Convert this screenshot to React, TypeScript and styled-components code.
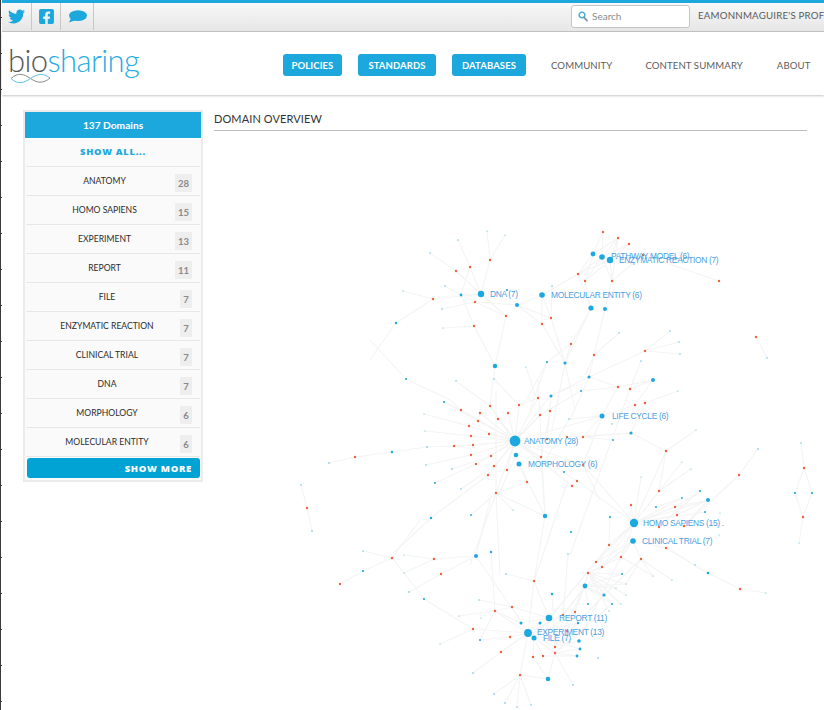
import React from "react";
import styled, { createGlobalStyle } from "styled-components";
import { FaTwitter, FaFacebookSquare } from "react-icons/fa";

const Global = createGlobalStyle`
  html, body { margin: 0; padding: 0; background: #fff; }
  body { font-family: Lato, "Liberation Sans", sans-serif; overflow: hidden; }
  * { box-sizing: border-box; }
`;

const Page = styled.div`
  width: 824px;
  height: 710px;
  overflow: hidden;
  padding-left: 2px;
  background:
    linear-gradient(#3a3a3a, #3a3a3a) 0 0 / 1px 100% no-repeat,
    repeating-linear-gradient(#fff 0, #fff 17px, #444 17px, #444 18px, #fff 18px, #fff 36px) 1px 0 / 1px 100% no-repeat,
    #fff;
  display: flex;
  flex-direction: column;
`;

const TopBar = styled.div`
  height: 32px;
  flex: none;
  border-top: 3px solid #1ca8dd;
  border-bottom: 1px solid #c4c4c4;
  background: linear-gradient(#f8f8f8, #e6e6e6);
  display: flex;
  align-items: stretch;
`;

const Social = styled.div`
  display: flex;
  height: 27px;
`;

const SocialCell = styled.a<{ $w: number }>`
  width: ${(p) => p.$w}px;
  border-right: 1px solid #c8c8c8;
  display: flex;
  align-items: center;
  justify-content: center;
  color: #1ca8dd;
`;

const SearchBox = styled.div`
  margin: 2px 0 0 477px;
  width: 119px;
  height: 23px;
  border: 1px solid #c6c6c6;
  border-radius: 3px;
  background: #fff;
  display: flex;
  align-items: center;
  padding: 0 0 1px 6px;
  gap: 4px;
  font-size: 10px;
  color: #8b8b8b;
  flex: none;
`;

const Profile = styled.div`
  margin-left: 8px;
  font-size: 9.7px;
  line-height: 23px;
  margin-top: 1px;
  color: #5b5b5b;
  white-space: nowrap;
  letter-spacing: 0.2px;
`;

const Header = styled.header`
  height: 63px;
  flex: none;
  background: #fff;
  box-shadow: 0 1px 2px rgba(0, 0, 0, 0.22);
  display: flex;
  align-items: flex-start;
  position: relative;
`;

const Logo = styled.div`
  width: 281px;
  padding: 10px 0 0 6px;
  flex: none;
`;

const LogoWord = styled.div`
  font-size: 31px;
  font-weight: 300;
  line-height: 36px;
  letter-spacing: -0.6px;
  color: #28ace2;
  height: 31px;
  white-space: nowrap;
`;

const LogoBio = styled.span`
  color: #555;
`;

const LogoWave = styled.svg`
  display: block;
  margin-left: 2px;
`;

const Nav = styled.nav`
  display: flex;
  align-items: center;
  height: 22px;
  margin-top: 22px;
`;

const NavButton = styled.a<{ $w: number; $gap: number }>`
  width: ${(p) => p.$w}px;
  margin-right: ${(p) => p.$gap}px;
  height: 22px;
  border-radius: 3px;
  background: #1ca8dd;
  color: #fff;
  font-size: 9.5px;
  font-weight: 700;
  display: flex;
  align-items: center;
  justify-content: center;
  white-space: nowrap;
  letter-spacing: 0.1px;
`;

const NavLink = styled.a<{ $gap: number }>`
  margin-left: ${(p) => p.$gap}px;
  color: #5d5d5d;
  font-size: 9.6px;
  white-space: nowrap;
  letter-spacing: 0.1px;
`;

const Body = styled.div`
  flex: 1;
  display: flex;
  align-items: flex-start;
  padding: 15px 0 0 21px;
  min-height: 0;
`;

const Sidebar = styled.aside`
  width: 180px;
  flex: none;
  background: #fafafa;
  border: 2px solid #ececec;
`;

const SideHead = styled.div`
  height: 27px;
  background: #1ca8dd;
  color: #fff;
  font-size: 10.2px;
  font-weight: 700;
  display: flex;
  align-items: center;
  justify-content: center;
  border-bottom: 1px solid #fff;
`;

const ShowAll = styled.div`
  height: 28px;
  margin: 0 1px;
  color: #1ca8dd;
  font-family: "Open Sans", sans-serif;
  font-weight: 800;
  font-size: 9.4px;
  letter-spacing: 0.7px;
  display: flex;
  align-items: center;
  justify-content: center;
  border-bottom: 1px solid #e8e8e8;
  padding-bottom: 2px;
`;

const Row = styled.div`
  height: 29px;
  margin: 0 1px;
  border-bottom: 1px solid #e8e8e8;
  display: flex;
  align-items: center;
  padding: 0 8px;
`;

const RowLabel = styled.div`
  flex: 1;
  text-align: center;
  font-size: 8.6px;
  color: #2c2c2c;
  white-space: nowrap;
`;

const Badge = styled.div<{ $wide: boolean }>`
  width: ${(p) => (p.$wide ? 17 : 12)}px;
  height: 18px;
  background: #eeeeee;
  color: #8a8a8a;
  font-size: 9.5px;
  font-weight: 700;
  display: flex;
  align-items: center;
  justify-content: center;
  flex: none;
  margin-top: 4px;
`;

const ShowMore = styled.div`
  height: 20px;
  margin: 1px 1px 2px 2px;
  border-radius: 3px;
  background: #00a3d3;
  color: #fff;
  font-family: "Open Sans", sans-serif;
  font-weight: 800;
  font-size: 9.5px;
  letter-spacing: 0.7px;
  display: flex;
  align-items: center;
  justify-content: flex-end;
  padding-right: 8px;
`;

const Main = styled.main`
  margin-left: 11px;
  width: 593px;
  flex: none;
`;

const Title = styled.h2`
  margin: 0;
  height: 21px;
  border-bottom: 1px solid #bdbdbd;
  font-size: 11px;
  line-height: 17px;
  font-weight: 400;
  color: #333;
  letter-spacing: 0.1px;
`;

const Graph = styled.svg`
  display: block;
  margin-left: -214px;
  overflow: visible;
`;

const Label = styled.text`
  font-family: "Liberation Sans", sans-serif;
  font-size: 8.4px;
  letter-spacing: -0.3px;
  fill: #4a9fdf;
`;

const domains: [string, number][] = [
  ["ANATOMY", 28],
  ["HOMO SAPIENS", 15],
  ["EXPERIMENT", 13],
  ["REPORT", 11],
  ["FILE", 7],
  ["ENZYMATIC REACTION", 7],
  ["CLINICAL TRIAL", 7],
  ["DNA", 7],
  ["MORPHOLOGY", 6],
  ["MOLECULAR ENTITY", 6],
];

/* node lists: x, y, r */
const blue: number[][] = [
  [593,254,2.4],[602,257,2.8],[610,260,3.2],[634,264,.8],[481,294,3.2],[542,295,2.8],[517,305,2],[591,308,2.6],[605,309,2],
  [461,295,1.4],[507,290,1.1],[552,286,.7],[495,366,2.2],[565,363,1.6],[547,362,1.1],[526,367,.6],[589,377,1.5],[653,380,2],
  [641,361,.7],[619,333,.7],[670,331,.7],[679,342,.7],[680,354,.7],[767,358,.7],[487,231,.6],[505,235,.6],[458,240,.7],[430,253,.7],
  [445,286,.7],[403,291,.6],[442,309,.7],[443,328,.6],[396,323,1.2],[406,379,1.1],[456,381,.7],[494,379,.7],
  [515,441,5.4],[516,455,2.3],[519,464,2.5],[545,516,2.2],[551,396,1.5],[444,402,1.1],[424,414,.6],[425,431,.6],[427,447,.8],
  [392,452,1.2],[329,463,.8],[426,465,.7],[452,469,.8],[435,483,1],[461,489,.7],[431,518,1.2],[471,515,.9],[513,510,.6],[301,485,.7],[312,531,.8],
  [602,416,2.5],[631,433,1.6],[612,424,.7],[613,440,.9],[569,419,.7],[581,391,1],[678,391,.6],[696,430,.6],[758,449,.8],[564,472,1],
  [682,462,.6],[691,469,.6],[641,477,.6],[700,491,1.1],[708,500,2],[682,498,.9],[656,507,1],[705,512,1],[720,513,.6],[610,517,1.1],
  [634,523,4.2],[633,541,2.8],[719,535,.6],[571,532,1.1],[801,443,.7],[795,493,1.1],[812,493,1.1],[799,543,.6],
  [622,574,1],[653,576,.6],[672,580,.6],[695,565,.7],[708,573,1.3],[766,593,.6],[585,586,2.4],[626,584,.6],[616,588,.6],[604,595,1.6],[626,595,.6],
  [588,604,1],[612,604,1],[621,604,.6],[609,611,.6],[578,623,1.2],[579,641,1.8],[580,649,1.4],[577,656,1.4],[598,658,.8],
  [363,551,.7],[363,571,1.1],[404,555,.6],[404,573,.6],[409,592,.8],[424,599,1.1],[476,556,2],[491,552,1.2],[506,574,.8],[568,554,.7],[552,594,1.2],
  [479,600,.7],[459,616,.6],[481,618,.6],[521,623,1.5],[540,623,1.5],[549,618,3.3],[528,633,3.9],[534,638,2.5],[480,640,1],[440,644,.6],
  [548,679,2.3],[573,685,.8],[473,673,.8],[494,694,.8],[505,703,.8],[517,707,.7],[531,705,.7],
];

const red: number[][] = [
  [603,232],[618,238],[629,244],[643,255],[578,274],[585,281],[612,281],[719,281],[490,260],[470,267],[456,271],[433,299],[475,302],[506,316],
  [551,318],[542,324],[474,326],[571,344],[594,355],[645,351],[756,337],[618,387],[630,389],
  [490,406],[461,410],[480,413],[508,413],[519,405],[538,398],[540,415],[550,411],[498,419],[478,421],[469,426],[489,434],[471,436],[473,445],[454,446],
  [471,455],[491,456],[476,464],[494,466],[507,470],[488,475],[541,457],[547,439],[527,482],[496,493],[355,457],[307,508],
  [583,437],[567,437],[635,405],[645,403],[666,451],[583,465],[577,481],[572,486],[739,475],[659,491],[631,505],[675,507],[677,515],[684,526],[659,527],
  [609,545],[666,548],[804,468],[803,517],[596,562],[621,557],[641,559],[602,567],[588,573],[740,589],[575,612],
  [392,558],[340,584],[434,559],[441,574],[534,581],[512,607],[495,611],[563,615],[473,629],[510,637],[567,631],[501,652],[555,647],[555,653],[543,656],[533,657],[520,675],
];

/* polylines through the graph: x1 y1 x2 y2 ... */
const links: string[] = [
  "487 231 490 260 481 294","505 235 490 260","458 240 470 267 481 294 456 271 430 253","470 267 461 295","445 286 461 295 481 294 433 299 403 291","433 299 396 323 370 360",
  "442 309 475 302 517 305 542 295 578 274 610 260","475 302 461 295 474 326 443 328","481 294 506 316 495 366 474 326","517 305 551 318 542 295 542 324","517 305 542 324 565 363 551 318","506 316 475 302","552 286 551 318",
  "593 254 578 274 602 257 585 281 610 260 612 281 602 257 603 232 593 254 618 238 602 257 629 244 610 260 618 238 612 281","585 281 591 308 578 274","585 281 593 254","610 260 643 255 612 281 605 309","643 255 719 281","610 260 634 264",
  "591 308 571 344 547 362 526 400","605 309 594 355 589 377","591 308 565 363","571 344 565 363 552 430","594 355 619 333","594 355 585 375","645 351 589 377","645 351 670 331","645 351 679 342","645 351 680 354","641 361 630 389","756 337 767 358",
  "589 377 618 387 653 380 630 389 619 420","589 377 570 420","565 363 575 410","547 362 530 410","526 367 535 395","495 366 490 406","589 377 550 396 515 441","653 380 635 405 602 416 515 441","678 391 645 403 635 405","618 386 602 416","653 380 618 387 581 391 540 415 515 441",
  "406 379 370 340","406 379 450 400 461 410 515 441","456 381 490 406 515 441","444 402 461 410","444 402 515 441","494 379 519 405",
  "424 414 469 426 515 441 478 421 480 413 515 441 490 406","425 431 471 436 515 441 489 434","515 441 498 419 515 441 508 413 515 441 519 405 538 398 515 441 540 415","515 441 473 445 454 446 427 447 392 452 355 457 329 463","515 441 454 447","515 441 471 455 426 465","515 441 491 456 452 469","515 441 476 464 435 483","515 441 494 466 461 489","515 441 488 475 431 518 390 556",
  "515 441 507 470","515 441 541 457 545 516 496 493 471 515","515 441 583 465 634 523","515 441 577 481 634 523","515 441 572 486","515 441 547 439 551 396 575 385","496 493 513 510","496 493 527 482 519 464 545 516","496 493 496 390","496 493 470 565","496 493 500 575","515 441 496 493","516 455 500 492","545 516 534 581","545 516 538 380",
  "541 457 550 411","583 437 602 416 569 419 540 470","602 416 583 465 600 500","583 437 631 433 666 451 696 430","583 437 613 440","567 437 631 433","631 433 645 403","666 451 659 491 682 462","659 491 691 469","666 451 634 523","659 491 634 523 641 477","631 505 634 523","739 475 758 449","739 475 684 526 708 500","301 485 307 508 312 531",
  "801 443 804 468 795 493 803 517 799 543","804 468 812 493 803 517","708 500 675 507 634 523 682 498 656 507","700 491 675 507 634 523 708 500 677 515 634 523","708 500 684 526","700 491 659 527 634 523","705 512 634 523","610 517 609 545","634 523 609 545","634 523 596 562","634 523 621 557","634 523 602 567","633 541 621 557 588 573","633 541 596 562","633 541 641 559 653 576","633 541 666 548 708 573 740 589 766 593","666 548 695 565","641 559 672 580","633 541 602 567 588 573","621 557 653 576","641 559 626 584 585 586",
  "588 573 585 586 622 574 588 573 626 584","585 586 616 588","585 586 604 595 588 573 626 595","585 586 588 604","585 586 612 604 588 573 621 604","588 573 609 611","641 559 604 595","588 573 575 612 534 638","609 545 534 638","621 557 578 641","596 562 549 618","602 567 563 615 528 633","575 612 578 623","578 623 528 633","619 420 570 555","568 554 563 615","580 649 528 633",
  "363 551 392 558 404 573 424 599 473 629 440 644","392 558 363 571 340 584","392 558 420 520","404 555 434 559 476 556 441 574 409 592","404 573 434 559","476 556 520 620","476 556 490 500","491 552 495 611","506 574 534 581 549 618","534 581 528 633","534 581 568 480","479 600 512 607 549 618","512 607 521 623 528 633","495 611 512 607","459 616 495 611 521 623","495 611 480 640","495 611 528 633","473 629 528 633","480 640 510 637 528 633","501 652 528 633","473 673 501 652 528 633","521 623 549 618 540 623 528 633",
  "552 594 555 647","567 631 528 633 555 647 578 641","528 633 555 653 580 649","534 638 543 656 577 656 555 653","534 638 533 657 548 679 555 653 573 685","534 638 555 653","528 633 520 675 548 679","520 675 494 694","520 675 505 703","520 675 517 707","520 675 531 705","528 633 563 615","555 647 585 586","555 653 612 604","555 647 604 595","567 631 585 586","563 615 585 586",
];

const labels: [string, number, number][] = [
  ["PATHWAY MODEL (6)", 611, 259],
  ["ENZYMATIC REACTION (7)", 619, 263],
  ["DNA (7)", 490, 297],
  ["MOLECULAR ENTITY (6)", 551, 298],
  ["LIFE CYCLE (6)", 612, 419],
  ["ANATOMY (28)", 524, 444],
  ["MORPHOLOGY (6)", 528, 467],
  ["HOMO SAPIENS (15) .", 643, 526],
  ["CLINICAL TRIAL (7)", 642, 544],
  ["REPORT (11)", 559, 621],
  ["EXPERIMENT (13)", 537, 635],
  ["FILE (7)", 543, 641],
];

export default function App() {
  return (
    <>
      <Global />
      <Page>
        <TopBar>
          <Social>
            <SocialCell $w={30}><FaTwitter size={17} /></SocialCell>
            <SocialCell $w={29}><FaFacebookSquare size={17} /></SocialCell>
            <SocialCell $w={33}>
              <svg width="19" height="13" viewBox="0 0 19 13" fill="#1ca8dd">
                <ellipse cx="10" cy="5.6" rx="9" ry="5.4" />
                <path d="M3 8 L1 12.5 L8 10 Z" />
              </svg>
            </SocialCell>
          </Social>
          <SearchBox>
            <svg width="10" height="11" viewBox="0 0 10 11" fill="none">
              <circle cx="4" cy="4" r="2.9" stroke="#3aa9dc" strokeWidth="1.4" />
              <path d="M6 6.3 L9 9.6" stroke="#7a99a8" strokeWidth="1.8" strokeLinecap="round" />
            </svg>
            <span>Search</span>
          </SearchBox>
          <Profile>EAMONNMAGUIRE'S PROFILE</Profile>
        </TopBar>
        <Header>
          <Logo>
            <LogoWord><LogoBio>bio</LogoBio>sharing</LogoWord>
            <LogoWave width="42" height="11" viewBox="0 0 42 11" fill="none">
              <path d="M1 5.5 C8 -1 14 1 20.5 5.5 C27 10 33 11 40 5" stroke="#8a8a8a" strokeWidth="1" />
              <path d="M1 5.5 C8 12 14 10 20.5 5.5 C27 1 33 -0.5 40 5" stroke="#5cc0ea" strokeWidth="1" />
            </LogoWave>
          </Logo>
          <Nav>
            <NavButton $w={59} $gap={16}>POLICIES</NavButton>
            <NavButton $w={78} $gap={16}>STANDARDS</NavButton>
            <NavButton $w={74} $gap={0}>DATABASES</NavButton>
            <NavLink $gap={25}>COMMUNITY</NavLink>
            <NavLink $gap={33}>CONTENT SUMMARY</NavLink>
            <NavLink $gap={34}>ABOUT</NavLink>
          </Nav>
        </Header>
        <Body>
          <Sidebar>
            <SideHead>137 Domains</SideHead>
            <ShowAll>SHOW ALL...</ShowAll>
            {domains.map(([name, n]) => (
              <Row key={name}>
                <RowLabel>{name}</RowLabel>
                <Badge $wide={n > 9}>{n}</Badge>
              </Row>
            ))}
            <ShowMore>SHOW MORE</ShowMore>
          </Sidebar>
          <Main>
            <Title>DOMAIN OVERVIEW</Title>
            <Graph width="824" height="580" viewBox="0 131 824 580">
              <g stroke="#f4f4f4" strokeWidth="1.1" fill="none">
                {links.map((p, i) => (
                  <polyline key={i} points={p} />
                ))}
              </g>
              <g fill="#1ca8e0">
                {blue.map(([x, y, r], i) => (
                  <circle key={i} cx={x} cy={y} r={r} opacity={r < 0.9 ? 0.75 : 1} />
                ))}
              </g>
              <g fill="#f0623a">
                {red.map(([x, y], i) => (
                  <circle key={i} cx={x} cy={y} r={1.2} />
                ))}
              </g>
              {labels.map(([t, x, y]) => (
                <Label key={t} x={x} y={y}>{t}</Label>
              ))}
            </Graph>
          </Main>
        </Body>
      </Page>
    </>
  );
}
